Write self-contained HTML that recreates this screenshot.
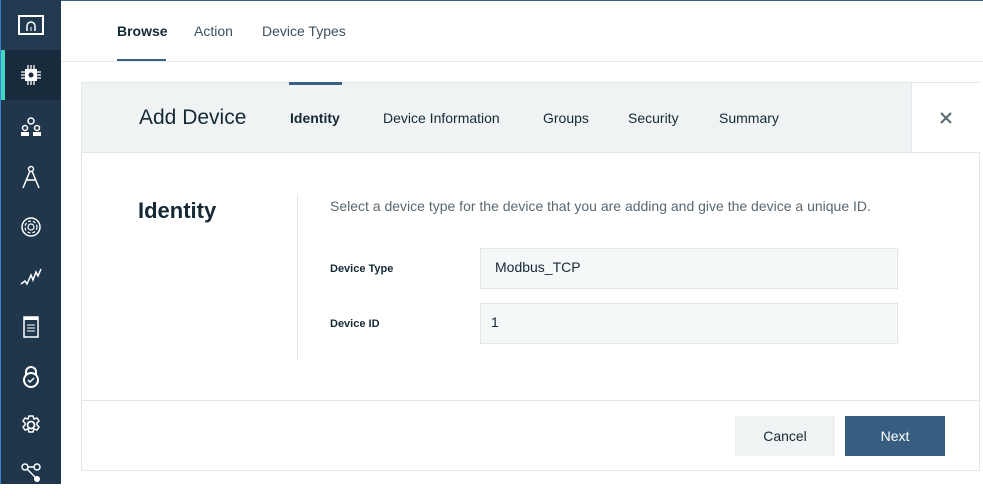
<!DOCTYPE html>
<html><head><style>
*{box-sizing:border-box;margin:0;padding:0}
body{width:983px;height:484px;overflow:hidden;background:#fff;font-family:"Liberation Sans",sans-serif;position:relative;color:#152935}
.side{position:absolute;left:0;top:0;width:61px;height:484px;background:#1f364b;border-left:1px solid #3a7fc9}
.ic{position:absolute;left:0;width:60px;height:50px;display:flex;align-items:center;justify-content:center}
.t{position:absolute;font-size:14px;color:#3d4f5c}
.topline{position:absolute;left:61px;top:0;right:0;height:1px;background:#3b6184}
.navline{position:absolute;left:61px;top:61px;right:0;height:1px;background:#e3ecec}
.panel{position:absolute;left:81px;top:82px;width:899px;height:389px;border:1px solid #dfe9e9}
.hdr{position:absolute;left:0;top:0;width:829px;height:70px;background:#eff3f4;border-bottom:1px solid #dfe9e9}
.close{position:absolute;left:829px;top:0;width:69px;height:70px;border-left:1px solid #dfe9e9;border-bottom:1px solid #dfe9e9;background:#fff}
.inp{position:absolute;left:398px;width:418px;height:41px;background:#f5f8f8;border:1px solid #e0e8e8;font-size:14px;color:#152935;padding:10px 0 0 14px}
.lab{position:absolute;left:248px;font-size:11px;font-weight:bold;color:#152935}
.btn{position:absolute;top:333px;width:100px;height:40px;font-size:14px;display:flex;align-items:center;justify-content:center}
</style></head><body>
<div class="side">
 <div class="ic" style="top:0;background:#213a50"><svg width="26" height="20"><rect x="1" y="1" width="24" height="18" fill="none" stroke="#fff" stroke-width="2"/><path d="M9 16v-5a4 4 0 0 1 8 0v5" fill="none" stroke="#fff" stroke-width="1.5"/><path d="M13 16v-4" stroke="#fff"/></svg></div>
 <div class="ic" style="top:50px;background:#172b3d"><div style="position:absolute;left:0;top:0;width:4px;height:50px;background:#41d6c3"></div><svg width="22" height="22"><rect x="5" y="5" width="12" height="12" fill="#fff"/><circle cx="11" cy="11" r="2.5" fill="#172b3d"/><path d="M8 1v4M11 1v4M14 1v4M8 17v4M11 17v4M14 17v4M1 8h4M1 11h4M1 14h4M17 8h4M17 11h4M17 14h4" stroke="#fff" stroke-width="1.3"/></svg></div>
 <div class="ic" style="top:102px"><svg width="22" height="22"><circle cx="11" cy="5" r="3" fill="none" stroke="#fff" stroke-width="1.5"/><circle cx="5" cy="12" r="2.5" fill="none" stroke="#fff" stroke-width="1.5"/><circle cx="17" cy="12" r="2.5" fill="none" stroke="#fff" stroke-width="1.5"/><rect x="1" y="16" width="8" height="4" fill="#fff"/><rect x="13" y="16" width="8" height="4" fill="#fff"/></svg></div>
 <div class="ic" style="top:152px"><svg width="20" height="24"><circle cx="10" cy="4" r="2.5" fill="none" stroke="#fff" stroke-width="1.5"/><path d="M9 6L2 23M11 6l7 17M5 15h10" stroke="#fff" stroke-width="1.5" fill="none"/></svg></div>
 <div class="ic" style="top:202px"><svg width="22" height="22"><circle cx="11" cy="11" r="9" fill="none" stroke="#fff" stroke-width="1.5"/><circle cx="11" cy="11" r="6" fill="none" stroke="#fff" stroke-width="1.2" stroke-dasharray="3 2"/><circle cx="11" cy="11" r="3" fill="none" stroke="#fff" stroke-width="1.2"/></svg></div>
 <div class="ic" style="top:252px"><svg width="22" height="20"><path d="M1 17l4-3 2 3 4-9 2 5 3-8 2 4 3-7" fill="none" stroke="#fff" stroke-width="1.5"/></svg></div>
 <div class="ic" style="top:302px"><svg width="16" height="22"><rect x="1" y="1" width="14" height="20" fill="none" stroke="#fff" stroke-width="1.5"/><rect x="1" y="1" width="14" height="3" fill="#fff"/><path d="M4 9h8M4 12h8M4 15h8" stroke="#fff"/></svg></div>
 <div class="ic" style="top:352px"><svg width="18" height="24"><path d="M4 10V7a5 5 0 0 1 10 0v3" fill="none" stroke="#fff" stroke-width="2"/><circle cx="9" cy="15" r="7" fill="none" stroke="#fff" stroke-width="2"/><path d="M6 15l2 2 4-4" fill="none" stroke="#fff" stroke-width="1.5"/></svg></div>
 <div class="ic" style="top:400px"><svg width="22" height="22"><circle cx="11" cy="11" r="3.5" fill="none" stroke="#fff" stroke-width="1.8"/><path d="M9 2h4l1 3 3-1 2 3-2 2 0 2 2 2-2 3-3-1-1 3h-4l-1-3-3 1-2-3 2-2v-2l-2-2 2-3 3 1z" fill="none" stroke="#fff" stroke-width="1.5"/></svg></div>
 <div class="ic" style="top:446px"><svg width="22" height="34"><circle cx="5" cy="13" r="3" fill="none" stroke="#fff" stroke-width="1.5"/><circle cx="17" cy="13" r="3" fill="none" stroke="#fff" stroke-width="1.5"/><circle cx="17" cy="25" r="3" fill="#fff"/><path d="M7 15l8 8M8 13h6" stroke="#fff" stroke-width="1.5"/></svg></div>
</div>
<div class="topline"></div>
<div class="t" style="left:117px;top:23px;font-weight:bold;color:#152935">Browse</div>
<div style="position:absolute;left:117px;top:59px;width:49px;height:3px;background:#3b6184"></div>
<div class="t" style="left:194px;top:23px">Action</div>
<div class="t" style="left:262px;top:23px">Device Types</div>
<div class="navline"></div>
<div class="panel">
 <div class="hdr">
  <div style="position:absolute;left:207px;top:-1px;width:53px;height:3px;background:#3b6184"></div>
  <div style="position:absolute;left:57px;top:23px;font-size:21px;color:#152935">Add Device</div>
  <div style="position:absolute;left:208px;top:27px;font-size:14px;font-weight:bold">Identity</div>
  <div style="position:absolute;left:301px;top:27px;font-size:14px">Device Information</div>
  <div style="position:absolute;left:461px;top:27px;font-size:14px">Groups</div>
  <div style="position:absolute;left:546px;top:27px;font-size:14px">Security</div>
  <div style="position:absolute;left:637px;top:27px;font-size:14px">Summary</div>
 </div>
 <div class="close"><svg style="position:absolute;left:28px;top:29px" width="12" height="12"><path d="M1 1l10 10M11 1L1 11" stroke="#5a6872" stroke-width="2"/></svg></div>
 <div style="position:absolute;left:56px;top:115px;font-size:22px;font-weight:bold">Identity</div>
 <div style="position:absolute;left:215px;top:112px;width:1px;height:164px;background:#dfe9e9"></div>
 <div style="position:absolute;left:248px;top:115px;font-size:14px;color:#5a6872">Select a device type for the device that you are adding and give the device a unique ID.</div>
 <div class="lab" style="top:180px">Device Type</div>
 <div class="inp" style="top:165px">Modbus_TCP</div>
 <div class="lab" style="top:235px">Device ID</div>
 <div class="inp" style="top:220px;padding-left:10px">1</div>
 <div style="position:absolute;left:0;top:317px;width:897px;height:1px;background:#dfe9e9"></div>
 <div class="btn" style="left:653px;background:#eff3f4;color:#152935">Cancel</div>
 <div class="btn" style="left:763px;background:#375d80;color:#fff">Next</div>
</div>
</body></html>
